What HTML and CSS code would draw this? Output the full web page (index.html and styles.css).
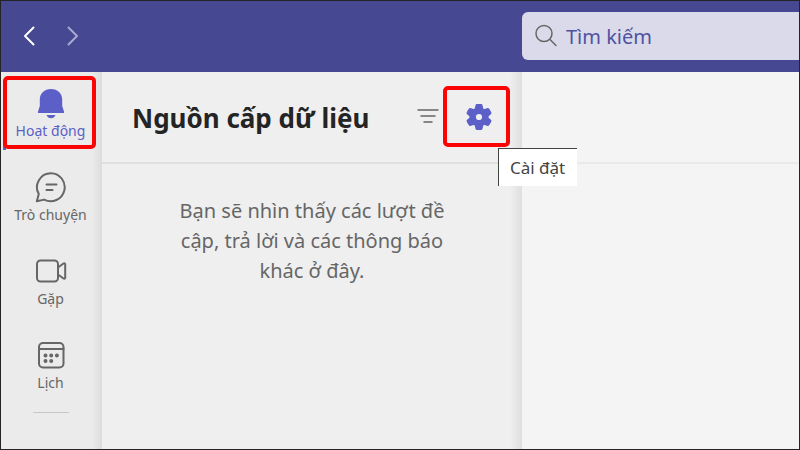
FILE: index.html
```html
<!DOCTYPE html>
<html lang="vi">

<head>
    <meta charset="UTF-8">
    <meta name="viewport" content="width=device-width, initial-scale=1">
    <title>Nguồn cấp dữ liệu</title>
    <link rel="stylesheet" href="styles.css">
</head>

<body>
    <header class="topbar">
        <div class="history">
            <button class="back" aria-label="Quay lại">
                <svg width="12" height="20" viewBox="0 0 12 20"><path d="M10.5 1.5 2 10l8.500 8.500" /></svg>
            </button>
            <button class="forward" aria-label="Tiếp">
                <svg width="12" height="20" viewBox="0 0 12 20"><path d="M1.500 1.500 10 10l-8.500 8.500" /></svg>
            </button>
        </div>
        <label class="search">
            <svg width="24" height="24" viewBox="0 0 24 24"><circle cx="10" cy="9.500" r="8" /><path d="m16 15.500 6 6" /></svg>
            <input type="search" placeholder="Tìm kiếm" aria-label="Tìm kiếm">
        </label>
    </header>

    <nav class="rail">
        <a class="item active marked" href="#">
            <svg width="32" height="32" viewBox="0 0 32 32"><path d="M16 2C9.500 2 4.800 6.500 4.800 12.500v6.500L3 24.500c-.3 1 .1 1.500 1.100 1.500h23.800c1 0 1.400-.5 1.100-1.500l-1.800-5.500V12.500C27.200 6.500 22.500 2 16 2zM11.500 28c.8 2 2.400 3.300 4.500 3.300s3.700-1.300 4.500-3.300z" /></svg>
            <span>Hoạt động</span>
        </a>
        <a class="item" href="#">
            <svg width="32" height="32" viewBox="0 0 32 32"><path d="M16 2.200a14 14 0 1 1-6.800 26.400L1.800 30.300l2-7.200A14 14 0 0 1 16 2.200zM11.500 13.500h10M11.500 19h6" /></svg>
            <span>Trò chuyện</span>
        </a>
        <a class="item" href="#">
            <svg width="32" height="32" viewBox="0 0 32 32"><rect x="2" y="5.500" width="21" height="21" rx="3.500" /><path d="m23 12.500 5.500-4c.8-.5 1.700-.1 1.700.8v13.400c0 .9-.9 1.300-1.700.8l-5.500-4" /></svg>
            <span>Gặp</span>
        </a>
        <a class="item" href="#">
            <svg width="32" height="32" viewBox="0 0 32 32"><rect x="4" y="4" width="24.500" height="24.500" rx="4" /><path d="M4 10h24.500" /><path class="dots" d="M10.500 16.500h.01M16.200 16.500h.01M21.900 16.500h.01M10.500 22h.01M16.200 22h.01" /></svg>
            <span>Lịch</span>
        </a>
        <hr>
    </nav>

    <section class="feed">
        <div class="feed-head">
            <h1>Nguồn cấp dữ liệu</h1>
            <button class="filter" aria-label="Bộ lọc">
                <svg width="22" height="16" viewBox="0 0 22 16"><path d="M1 2h20M4 8h14M7 14h8" /></svg>
            </button>
            <button class="settings marked" aria-describedby="tip">
                <svg width="26" height="26" viewBox="-13 -13 26 26" role="img" aria-label="Cài đặt">
                    <circle r="9.500" />
                    <path id="tooth" d="M-4.400-8-3.400-12q.2-.8 1-.9a13 13 0 0 1 4.800 0q.8.1 1 .9l1 4z" />
                    <use href="#tooth" transform="rotate(60)" />
                    <use href="#tooth" transform="rotate(120)" />
                    <use href="#tooth" transform="rotate(180)" />
                    <use href="#tooth" transform="rotate(240)" />
                    <use href="#tooth" transform="rotate(300)" />
                    <circle class="hole" r="3.100" />
                </svg>
            </button>
            <div class="tooltip" id="tip" role="tooltip">Cài đặt</div>
        </div>
        <p>Bạn sẽ nhìn thấy các lượt đề cập, trả lời và các thông báo khác ở đây.</p>
    </section>

    <main class="content">
        <div class="content-head"></div>
    </main>
</body>

</html>
```

FILE: styles.css
```css
* {
    box-sizing: border-box;
}

body {
    margin: 0;
    min-height: 100vh;
    display: grid;
    grid-template-columns: 101px 420px minmax(0, 1fr);
    grid-template-rows: 71px 1fr;
    border: 1px solid #242424;
    background-color: #f4f4f4;
    color: #666;
    font-family: "Noto Sans", "Open Sans", sans-serif;
}

button {
    border: 0;
    padding: 0;
    background: none;
    display: flex;
    align-items: center;
    justify-content: center;
}

svg {
    display: block;
    flex: none;
    fill: none;
    stroke: currentColor;
    stroke-width: 2;
    stroke-linecap: round;
    stroke-linejoin: round;
}

/* top bar */

.topbar {
    grid-column: 1 / -1;
    display: grid;
    grid-template-columns: subgrid;
    align-items: center;
    padding-bottom: 1px;
    background-color: #464891;
}

.history {
    grid-column: 1 / 3;
    display: flex;
    gap: 32px;
    padding-left: 22px;
}

.back {
    color: white;
}

.forward {
    color: #a9aad4;
}

.search {
    height: 48px;
    display: flex;
    align-items: center;
    gap: 8px;
    padding: 0 12px;
    border-radius: 6px 0 0 6px;
    background-color: #dadaea;
    color: #666;
}

.search svg {
    stroke-width: 1.5;
}

.search input {
    flex: 1;
    min-width: 0;
    border: 0;
    padding: 0;
    outline: 0;
    background: none;
    font: 20px "Noto Sans", "Open Sans", sans-serif;
}

.search input::placeholder {
    color: #4f52a0;
    opacity: 1;
}

/* left rail */

.rail {
    padding-right: 2px;
    background: linear-gradient(to left, #dcdcdc, #ebebeb 10px);
}

.item {
    position: relative;
    height: 84px;
    padding-top: 15px;
    display: flex;
    flex-direction: column;
    align-items: center;
    gap: 2px;
    color: #666;
    font-size: 14px;
    line-height: 20px;
    text-decoration: none;
    white-space: nowrap;
}

.item .dots {
    stroke-width: 4;
}

.active {
    color: #5b5fc7;
}

.active svg {
    fill: currentColor;
    stroke: none;
}

.active::before {
    content: "";
    position: absolute;
    left: 2px;
    bottom: 6px;
    width: 3px;
    height: 44px;
    background-color: #5b5fc7;
}

.rail hr {
    width: 36px;
    margin: 4px auto;
    border: 0;
    border-top: 1px solid #c8c8c8;
}

/* red highlight frames */

.marked::after {
    content: "";
    position: absolute;
    inset: 4px 4px 7px 2px;
    border: 4px solid #fa0404;
    border-radius: 5px;
}

/* feed */

.feed {
    background: linear-gradient(to left, #dfdfdf, #efefef 12px);
}

.feed-head {
    position: relative;
    height: 92px;
    display: flex;
    align-items: center;
    padding: 0 12px 2px 30px;
    border-bottom: 2px solid #dfdfdf;
}

.feed-head h1 {
    flex: 1;
    margin: 0;
    padding-top: 4px;
    color: #242424;
    font-size: 26px;
    line-height: 32px;
    white-space: nowrap;
}

.filter {
    margin-right: 4px;
    color: #666;
}

.filter svg {
    stroke-width: 1.5;
}

.settings {
    position: relative;
    width: 67px;
    height: 61px;
    padding: 2px 0 0 4px;
    color: #5b5fc7;
}

.settings::after {
    inset: 0;
}

.settings svg {
    fill: currentColor;
    stroke: none;
}

.settings .hole {
    fill: #efefef;
}

.tooltip {
    position: absolute;
    top: 76px;
    left: 396px;
    z-index: 1;
    padding: 6px 12px 6px 11px;
    border-top: 1px solid #444;
    border-left: 1px solid #444;
    background-color: white;
    color: #444;
    font-size: 17px;
    line-height: 25px;
    white-space: nowrap;
}

.feed p {
    max-width: 300px;
    margin: 32px auto;
    font-size: 20px;
    line-height: 30px;
    text-align: center;
}

/* content */

.content-head {
    height: 92px;
    border-bottom: 2px solid #e9e9e9;
}
```
